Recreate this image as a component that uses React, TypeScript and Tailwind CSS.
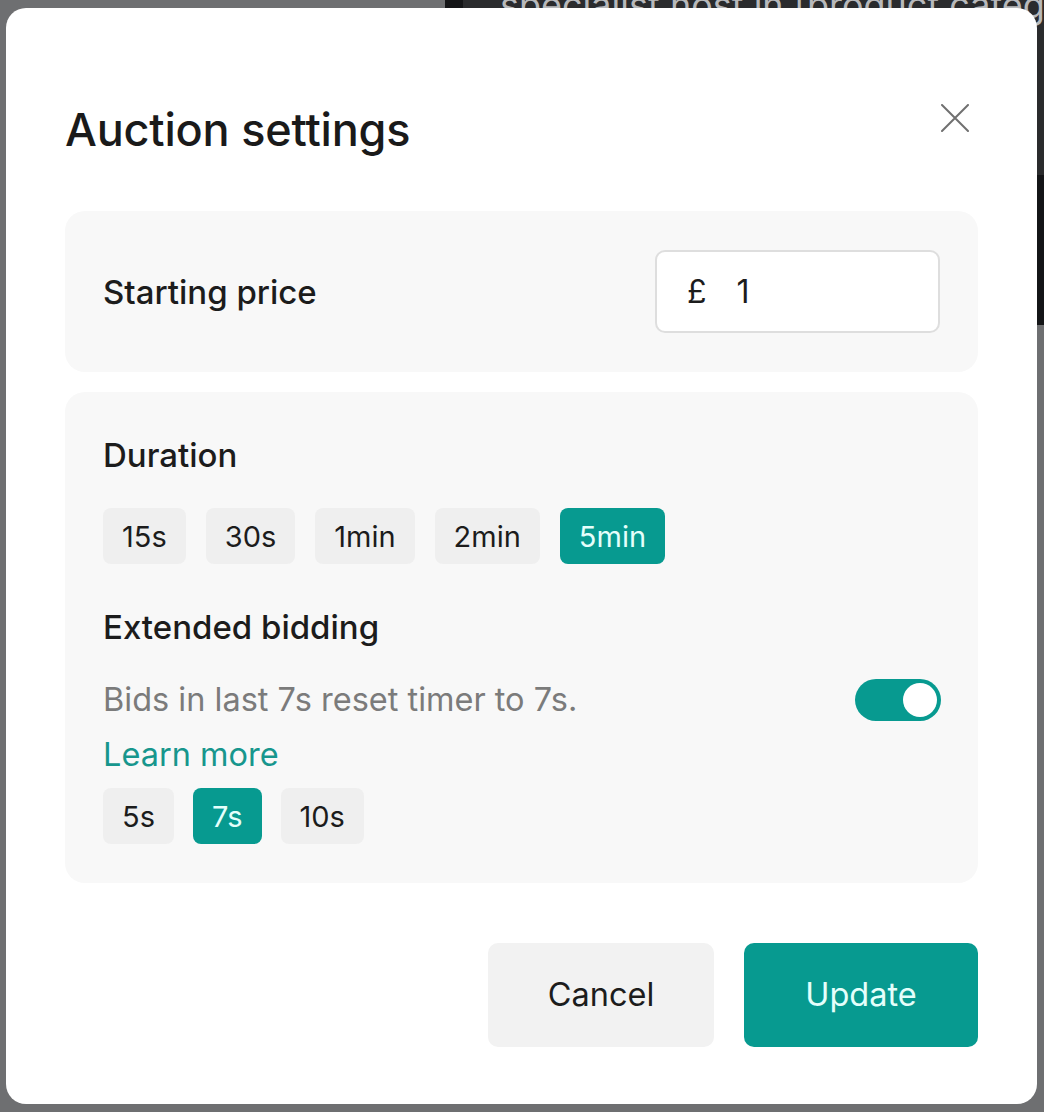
import { useState } from "react";

const DURATIONS = ["15s", "30s", "1min", "2min", "5min"];
const EXTENSIONS = ["5s", "7s", "10s"];

type ChipProps = {
    label: string;
    active: boolean;
    onClick: () => void;
};

function Chip({ label, active, onClick }: ChipProps) {
    return (
        <button
            type="button"
            onClick={onClick}
            className={
                active
                    ? "h-[56px] px-[19px] rounded-[8px] bg-[#079a90] text-[#e4fffb] text-[29px] leading-none"
                    : "h-[56px] px-[19px] rounded-[8px] bg-[#efefef] text-[#1c1c1c] text-[29px] leading-none"
            }
        >
            {label}
        </button>
    );
}

export default function App() {
    const [duration, setDuration] = useState("5min");
    const [extension, setExtension] = useState("7s");
    const [extended, setExtended] = useState(true);
    const [price, setPrice] = useState("1");

    return (
        <div
            className="relative w-[1044px] h-[1112px] overflow-hidden bg-[#6e6f71]"
            style={{ fontFamily: "Inter, 'Noto Sans', sans-serif" }}
        >
            {/* page behind the dialog */}
            <div className="absolute left-[445px] top-0 w-[599px] h-[325px] bg-[#141517]">
                <div className="h-[175px] ml-[18px] bg-[#2a2b2d] overflow-hidden">
                    <p className="-mt-[22px] ml-[37px] text-[36px] text-[#b8b9bb] whitespace-nowrap">
                        specialist host in [product category]
                    </p>
                </div>
            </div>

            <div className="relative pt-[8px] pl-[6px]">
                <div className="w-[1031px] h-[1096px] bg-white rounded-[20px] pt-[98px] px-[59px] pb-[57px] flex flex-col">
                    <div className="flex justify-between items-start">
                        <h1 className="text-[45px] leading-[48px] font-medium text-[#1a1a1a] tracking-[-0.2px]">
                            Auction settings
                        </h1>
                        <button type="button" className="mt-[-2px] mr-[9px] w-[28px] h-[28px] text-[#707070]">
                            <svg viewBox="0 0 28 28" width="28" height="28" fill="none" stroke="currentColor" strokeWidth="2" strokeLinecap="round">
                                <path d="M1 1 L27 27 M27 1 L1 27" />
                            </svg>
                        </button>
                    </div>

                    <div className="mt-[57px] bg-[#f8f8f8] rounded-[20px] py-[39px] px-[38px] flex items-center justify-between">
                        <span className="text-[33px] leading-[36px] font-medium text-[#1c1c1c]">Starting price</span>
                        <label className="w-[285px] h-[83px] bg-white border-2 border-[#dedede] rounded-[10px] flex items-center pl-[30px] gap-[30px] text-[32px] text-[#1c1c1c]">
                            <span>£</span>
                            <input
                                value={price}
                                onChange={(e) => setPrice(e.target.value)}
                                className="w-[150px] bg-transparent outline-none"
                            />
                        </label>
                    </div>

                    <div className="mt-[20px] bg-[#f8f8f8] rounded-[20px] pt-[45px] pb-[39px] px-[38px] flex flex-col">
                        <h2 className="text-[33px] leading-[36px] font-medium text-[#1c1c1c]">Duration</h2>
                        <div className="mt-[35px] flex gap-[20px]">
                            {DURATIONS.map((d) => (
                                <Chip key={d} label={d} active={d === duration} onClick={() => setDuration(d)} />
                            ))}
                        </div>

                        <h2 className="mt-[45px] text-[33px] leading-[36px] font-medium text-[#1c1c1c]">
                            Extended bidding
                        </h2>
                        <div className="mt-[34px] flex items-center justify-between">
                            <p className="text-[32.5px] leading-[36px] text-[#7b7b7b]">
                                Bids in last 7s reset timer to 7s.
                            </p>
                            <button
                                type="button"
                                onClick={() => setExtended(!extended)}
                                className={
                                    extended
                                        ? "mr-[-1px] w-[86px] h-[42px] rounded-full bg-[#079a90] flex items-center justify-end px-[4px]"
                                        : "mr-[-1px] w-[86px] h-[42px] rounded-full bg-[#d4d4d4] flex items-center justify-start px-[4px]"
                                }
                            >
                                <span className="w-[34px] h-[34px] rounded-full bg-white" />
                            </button>
                        </div>
                        <a href="#" className="mt-[16px] text-[32.5px] leading-[36px] text-[#17968d]">
                            Learn more
                        </a>
                        <div className="mt-[15px] flex gap-[19px]">
                            {EXTENSIONS.map((x) => (
                                <Chip key={x} label={x} active={x === extension} onClick={() => setExtension(x)} />
                            ))}
                        </div>
                    </div>

                    <div className="mt-auto flex justify-end gap-[30px]">
                        <button
                            type="button"
                            className="w-[226px] h-[104px] rounded-[10px] bg-[#f2f2f2] text-[32.5px] text-[#1c1c1c]"
                        >
                            Cancel
                        </button>
                        <button
                            type="button"
                            className="w-[234px] h-[104px] rounded-[10px] bg-[#079a90] text-[32.5px] text-[#e4fffb]"
                        >
                            Update
                        </button>
                    </div>
                </div>
            </div>
        </div>
    );
}
